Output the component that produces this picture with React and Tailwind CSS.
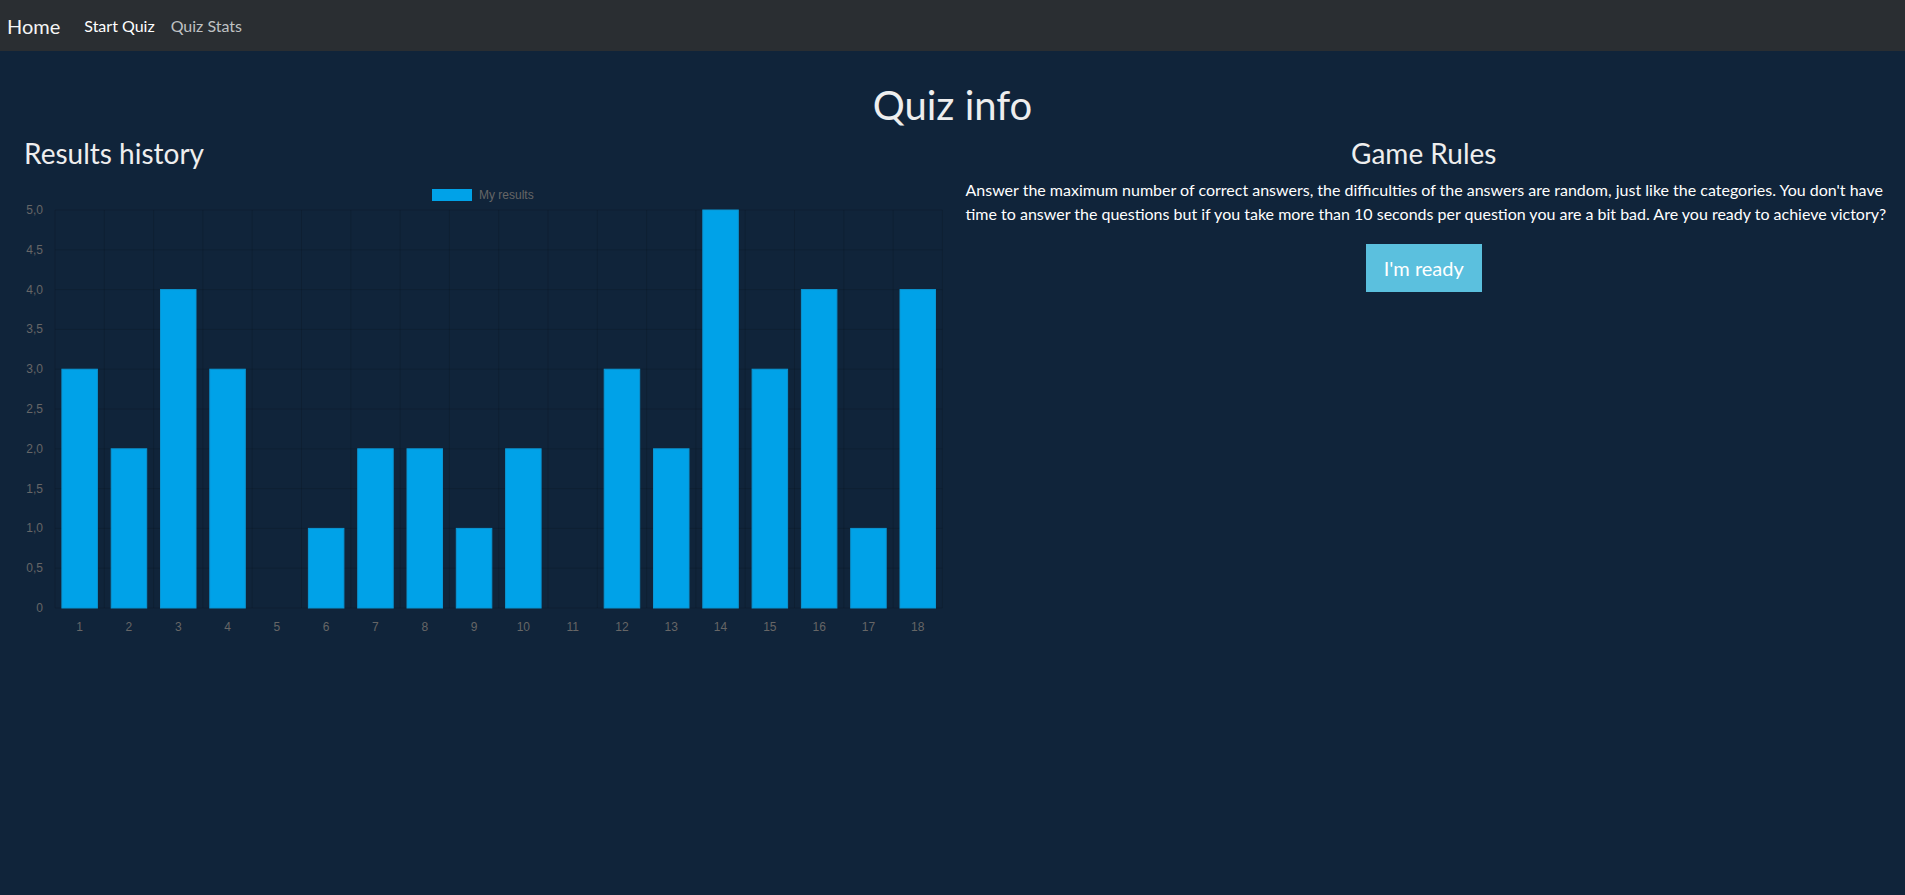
import React from "react";

const DATA = [3, 2, 4, 3, 0, 1, 2, 2, 1, 2, 0, 3, 2, 5, 3, 4, 1, 4];

function Chart() {
  const W = 921;
  const H = 470;
  const left = 31;
  const top = 33;
  const bottom = 431;
  const cat = 49.3;
  const right = left + cat * DATA.length;
  const barW = 35.5;
  const unit = (bottom - top) / 5;
  const ticks = [0, 0.5, 1, 1.5, 2, 2.5, 3, 3.5, 4, 4.5, 5];
  const fmt = (v) => (v === 0 ? "0" : v.toFixed(1).replace(".", ","));
  return (
    <svg width={W} height={H} className="block" style={{ fontFamily: '"Liberation Sans", Arial, sans-serif' }}>
      <rect x={408} y={12} width={40} height={12} fill="#00a2e8" />
      <text x={455} y={21.5} fontSize={12} fill="#666">My results</text>
      {ticks.map((t) => {
        const y = bottom - t * unit;
        return (
          <g key={t}>
            <line x1={left} x2={right} y1={y} y2={y} stroke="rgba(0,0,0,0.12)" strokeWidth={1} />
            <text x={19} y={y + 4} fontSize={12} fill="#666" textAnchor="end">{fmt(t)}</text>
          </g>
        );
      })}
      {Array.from({ length: DATA.length + 1 }).map((_, i) => (
        <line key={i} x1={left + i * cat} x2={left + i * cat} y1={top} y2={bottom} stroke="rgba(0,0,0,0.12)" strokeWidth={1} />
      ))}
      {DATA.map((v, i) => {
        const x = left + i * cat + (cat - barW) / 2;
        const h = v * unit;
        return (
          <g key={i}>
            {v > 0 && <rect x={x} y={bottom - h} width={barW} height={h} fill="#00a2e8" stroke="#0a95d2" strokeWidth={1} />}
            <text x={left + i * cat + cat / 2} y={454} fontSize={12} fill="#666" textAnchor="middle">{i + 1}</text>
          </g>
        );
      })}
    </svg>
  );
}

export default function App() {
  return (
    <div className="min-h-[895px] bg-[#10243a]" style={{ fontFamily: 'Lato, "Open Sans", sans-serif' }}>
      <nav className="h-[51px] bg-[#2a2e32] flex items-center pl-[7px]">
        <span className="text-[20px] text-[#f5f5f5] mr-4 leading-[30px]">Home</span>
        <span className="px-2 text-base text-white leading-6">Start Quiz</span>
        <span className="px-2 text-base text-[#bfc1c3] leading-6">Quiz Stats</span>
      </nav>
      <h1 className="text-[40px] leading-[1.2] text-center text-[#eeeeee] pt-[30px] mb-[8px]">Quiz info</h1>
      <div className="flex">
        <div className="w-1/2 pl-[24px]">
          <h3 className="text-[28px] leading-[1.2] text-[#eeeeee] mb-[6px]">Results history</h3>
          <Chart />
        </div>
        <div className="w-1/2 pl-[13px] pr-[15px]">
          <h3 className="text-[28px] leading-[1.2] text-[#eeeeee] text-center mb-[7px] mr-[8px]">Game Rules</h3>
          <p className="text-base leading-6 text-white mb-[18px]">
            Answer the maximum number of correct answers, the difficulties of the answers are random, just like the categories. You don't have time to answer the questions but if you take more than 10 seconds per question you are a bit bad. Are you ready to achieve victory?
          </p>
          <div className="flex justify-center mr-[8px]">
            <button className="bg-[#5bc0de] border border-[#5bc0de] text-white text-[20px] leading-[30px] px-[17px] py-2">I'm ready</button>
          </div>
        </div>
      </div>
    </div>
  );
}
